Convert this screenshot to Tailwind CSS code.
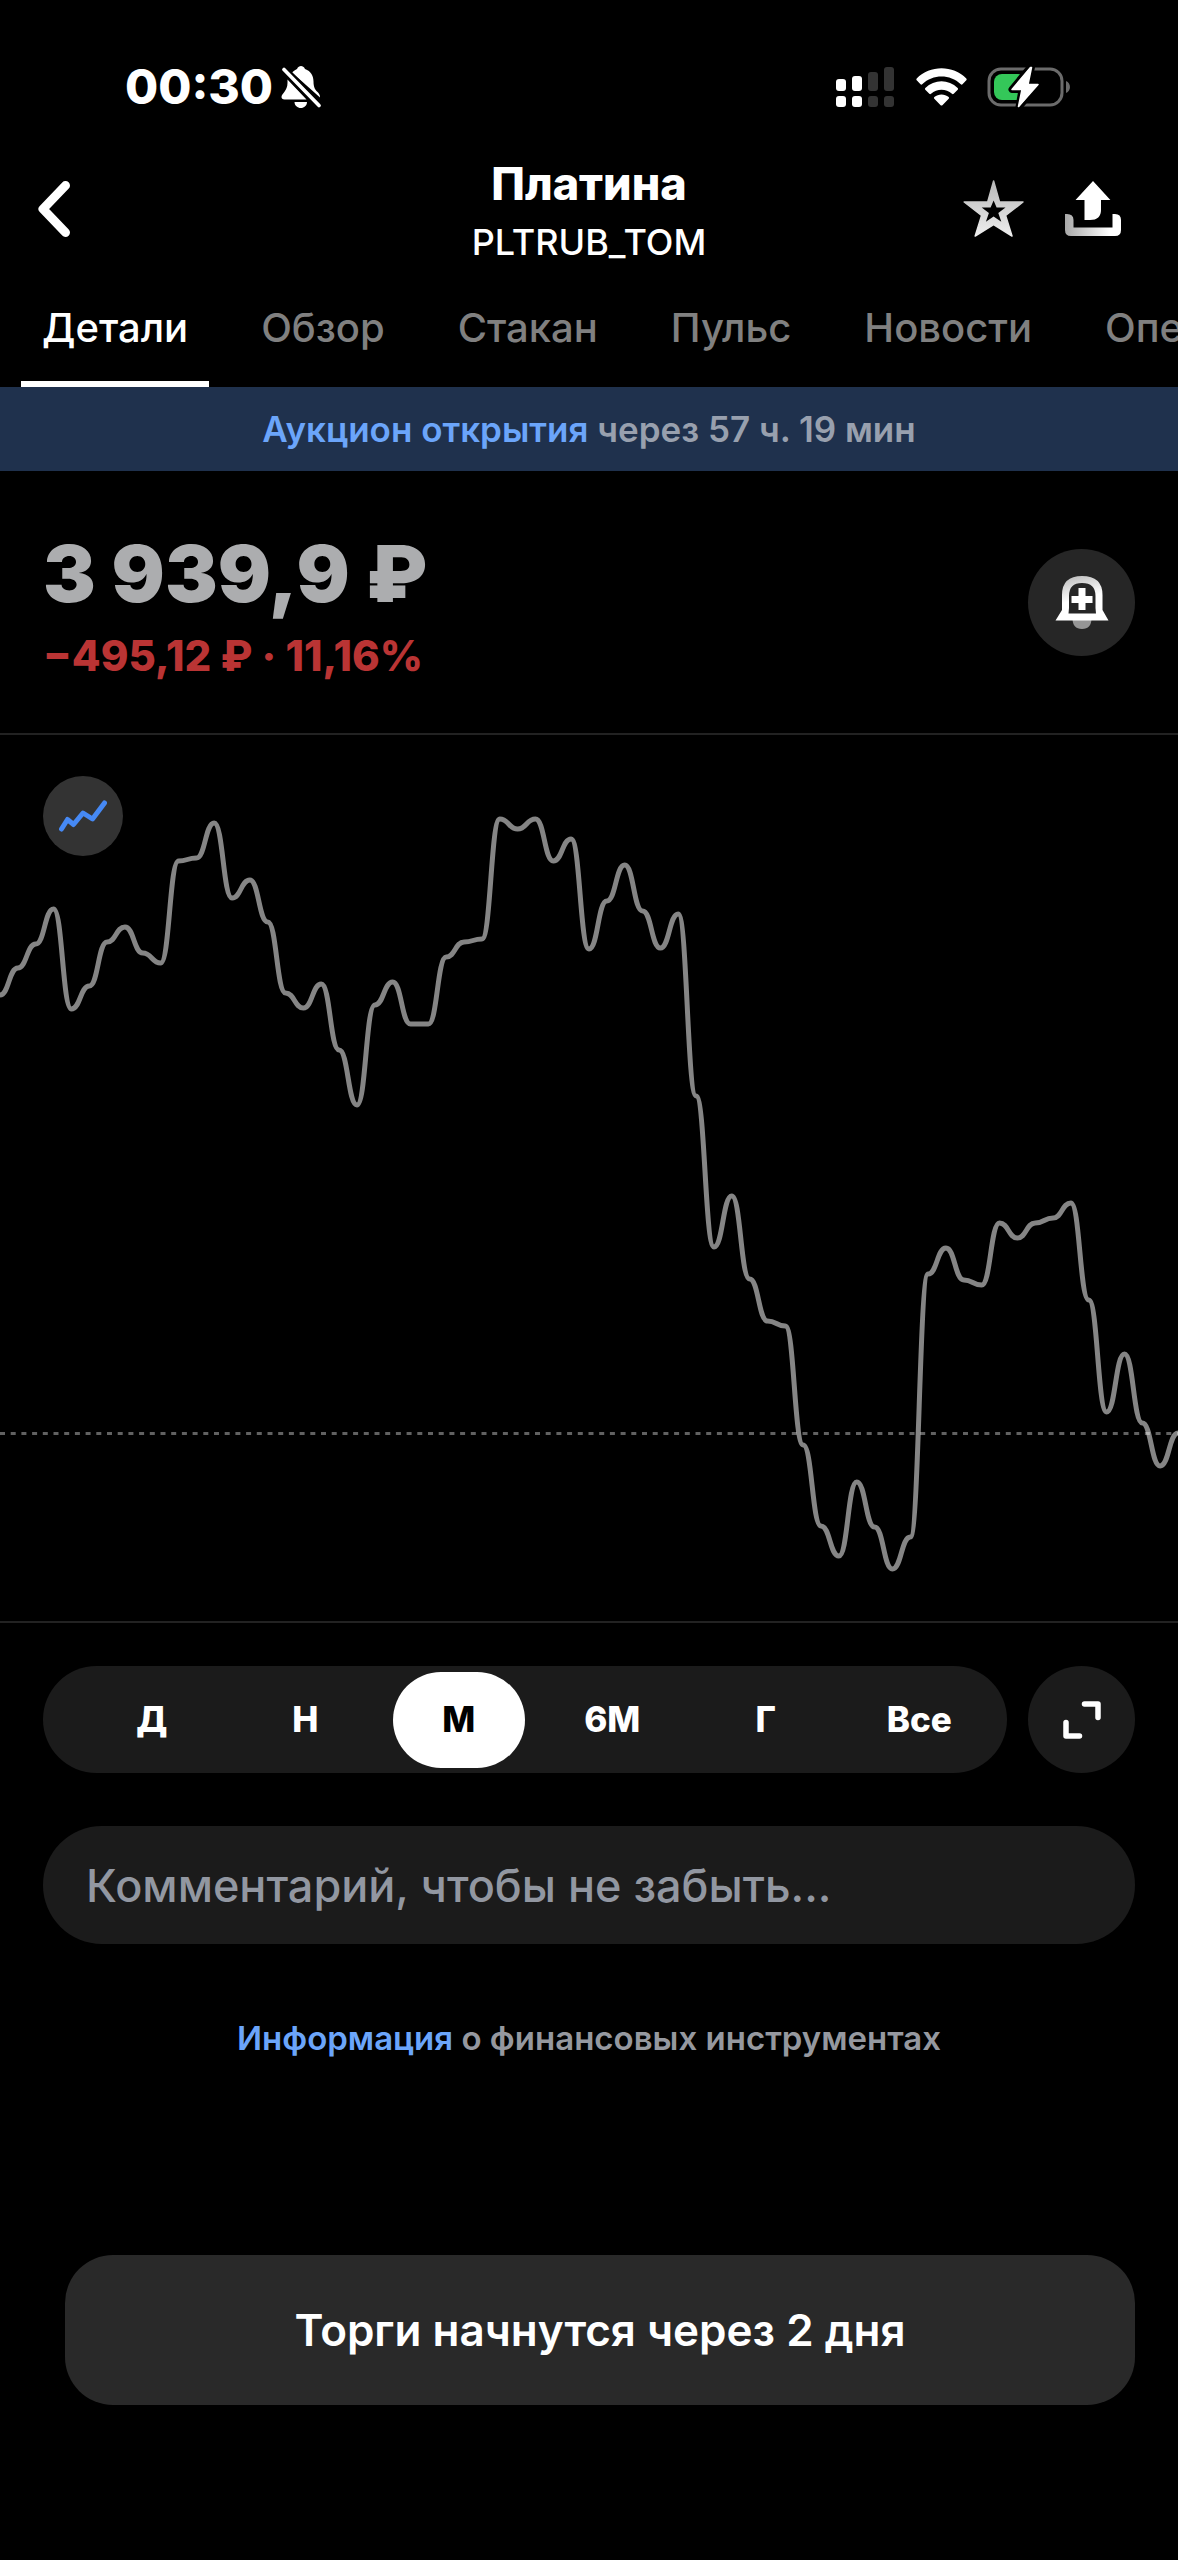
<!DOCTYPE html>
<html lang="ru">
<head>
    <meta charset="UTF-8">
    <meta name="viewport" content="width=device-width, initial-scale=1.0">
    <title>Платина - PLTRUB_TOM</title>
    <script src="https://cdn.jsdelivr.net/npm/@tailwindcss/browser@4"></script>
</head>
<body class="bg-black text-white min-h-screen overflow-x-hidden font-['Inter','Liberation_Sans',sans-serif]">
    <!-- Status bar -->
    <div class="h-[134px] pt-10 pl-[125px] pr-[107px] flex items-center justify-between">
        <div class="flex items-center gap-2">
            <span class="text-[48px] leading-[56px] font-extrabold">00:30</span>
            <svg class="w-10 h-[42px]" viewBox="0 0 40 42" fill="#fff" aria-hidden="true">
                <path d="M11 6.500C13 4.500 15 3.500 16 3C17 .8 18.500 0 20 0C21.500 0 23 .8 24 3C30 5 32.500 10 32.500 15.500C32.500 21 34 23.500 36 25.500C38 27.500 39 28.500 39 31.500Z"/>
                <path d="M6.500 13.500L25.500 33.500H3.500C1.500 33.500 .5 32.500 .5 31C.5 27.500 6.500 25 6.500 17Z"/>
                <path d="M13.500 36H26C26 39.500 23 42 19.800 42C16.500 42 13.500 39.500 13.500 36Z"/>
                <path d="M3 3.500L38 39.500" stroke="#000" stroke-width="8"/>
                <path d="M3 3.500L38 39.500" stroke="#fff" stroke-width="3.600" stroke-linecap="round"/>
            </svg>
        </div>
        <div class="flex items-center gap-5">
            <svg class="w-[60px] h-10" viewBox="0 0 60 40" fill="#fff" aria-hidden="true">
                <rect x="0" y="12" width="10" height="12" rx="3"/>
                <rect x="16" y="9" width="10" height="15" rx="3"/>
                <rect x="32" y="5" width="10" height="19" rx="3" fill="#333"/>
                <rect x="48" y="0" width="10" height="24" rx="3" fill="#333"/>
                <rect x="0" y="29" width="10" height="11" rx="3"/>
                <rect x="16" y="29" width="10" height="11" rx="3"/>
                <rect x="32" y="29" width="10" height="11" rx="3" fill="#333"/>
                <rect x="48" y="29" width="10" height="11" rx="3" fill="#333"/>
            </svg>
            <svg class="w-[51px] h-[38px]" viewBox="0 0 51 38" fill="#fff" aria-hidden="true">
                <path d="M.7 10.500C14 -3.200 37 -3.200 50.300 10.500Q51 11.500 50.300 12.300L46.500 16.300Q45.700 17 44.800 16.300C34 6 17 6 6.200 16.300Q5.300 17 4.500 16.300L.7 12.300Q0 11.500 .7 10.500Z"/>
                <path d="M9.300 20C18.500 11 32.500 11 41.700 20Q42.500 21 41.700 21.800L37.700 25.800Q36.800 26.500 36 25.800C30 20.500 21 20.500 15 25.800Q14.200 26.500 13.300 25.800L9.300 21.800Q8.500 21 9.300 20Z"/>
                <path d="M18.300 29C22.500 25.500 28.500 25.500 32.700 29Q33.500 30 32.700 30.800L26.400 37.200Q25.500 38 24.600 37.200L18.300 30.800Q17.500 30 18.300 29Z"/>
            </svg>
            <svg class="w-[84px] h-[42px]" viewBox="0 0 84 42" aria-hidden="true">
                <rect x="2" y="3" width="73" height="36" rx="12" fill="none" stroke="#6b6b6b" stroke-width="3"/>
                <rect x="7" y="8" width="32" height="26" rx="8" fill="#34c759"/>
                <path d="M79 15C84.300 17 84.300 25 79 27Z" fill="#6b6b6b"/>
                <path d="M43.500 1L25 23.500H35L32 41L51 18H41L44.500 1Z" fill="#fff" stroke="#000" stroke-width="7" stroke-linejoin="round" paint-order="stroke"/>
                <path d="M43.500 1.500L25 23.500H35L31.500 40.500L51 18.500H41L44.500 1.500Z" fill="#fff" stroke="#fff" stroke-width="1.500" stroke-linejoin="round"/>
            </svg>
        </div>
    </div>

    <!-- Header -->
    <header class="h-[150px] pl-[37px] pr-[55px] grid grid-cols-[1fr_auto_1fr] items-center">
        <button type="button" aria-label="Назад" class="justify-self-start">
            <svg class="w-9 h-14" viewBox="0 0 36 56" fill="none" stroke="#fff" stroke-width="9" stroke-linecap="round" stroke-linejoin="round">
                <path d="M28.500 4.500L6 28L28.500 51.500"/>
            </svg>
        </button>
        <div class="text-center pl-[18px]">
            <h1 class="text-[45px] leading-[66px] font-extrabold">Платина</h1>
            <p class="text-[36px] leading-[50px] font-medium">PLTRUB_TOM</p>
        </div>
        <div class="justify-self-end flex items-center gap-9">
            <button type="button" aria-label="В избранное">
                <svg class="w-[67px] h-[62px]" viewBox="0 0 67 62">
                    <defs>
                        <linearGradient id="starFill" x1="0" y1="0" x2="0" y2="1">
                            <stop offset="0" stop-color="#b8b8b8"/>
                            <stop offset="1" stop-color="#eee"/>
                        </linearGradient>
                    </defs>
                    <path fill="url(#starFill)" stroke="url(#starFill)" stroke-width="1.500" stroke-linejoin="round" d="M33.600 3L39.500 24H63L45.600 37.500L52 58L33.600 46.500L15.200 58L21.600 37.500L4.200 24H27.700Z"/>
                    <path fill="#000" d="M33.600 22.500L36.600 29.500H45.500L38.300 35L41.300 43.700L33.600 38.500L25.900 43.700L28.900 35L21.700 29.500H30.600Z"/>
                </svg>
            </button>
            <button type="button" aria-label="Поделиться">
                <svg class="w-[60px] h-[62px]" viewBox="0 0 60 62">
                    <defs>
                        <linearGradient id="trayFill" x1="0" y1="0" x2="1" y2="0">
                            <stop offset="0" stop-color="#a8a8a8"/>
                            <stop offset=".8" stop-color="#fff"/>
                        </linearGradient>
                    </defs>
                    <path fill="#fff" d="M30 3L47.400 22H38V32Q38 42 27 42H21.500V22H12.500Z"/>
                    <path fill="url(#trayFill)" d="M2 36H4Q10.500 36 10.500 42V49.500H49.500V36H52Q58 36 58 42V52Q58 58 52 58H8Q2 58 2 52Z"/>
                </svg>
            </button>
        </div>
    </header>

    <!-- Tabs -->
    <nav class="pl-[21px] flex gap-[31px] overflow-hidden whitespace-nowrap text-[40px] leading-[60px] font-medium text-[#808080]">
        <a href="#details" aria-current="page" class="pt-3.5 pb-[23px] px-[21px] border-b-6 border-white text-white">Детали</a>
        <a href="#overview" class="pt-3.5 pb-[23px] px-[21px] border-b-6 border-transparent">Обзор</a>
        <a href="#orderbook" class="pt-3.5 pb-[23px] px-[21px] border-b-6 border-transparent">Стакан</a>
        <a href="#pulse" class="pt-3.5 pb-[23px] px-[21px] border-b-6 border-transparent">Пульс</a>
        <a href="#news" class="pt-3.5 pb-[23px] px-[21px] border-b-6 border-transparent">Новости</a>
        <a href="#operations" class="pt-3.5 pb-[23px] px-[21px] border-b-6 border-transparent">Операции</a>
    </nav>

    <div class="bg-[#1f314d] h-[84px] flex items-center justify-center text-[35px] font-semibold text-[#98a0ae]">
        <p><a href="#auction" class="text-[#6ba5fa]">Аукцион открытия</a> через 57 ч. 19 мин</p>
    </div>

    <main>
        <!-- Price -->
        <section class="h-[264px] px-[43px] flex items-center justify-between border-b-2 border-[#222]">
            <div>
                <p class="text-[79px] leading-[108px] font-black text-[#acadaf]">3 939,9 ₽</p>
                <p class="text-[42px] leading-[58px] font-extrabold text-[#ba3434]">−495,12 ₽ · 11,16%</p>
            </div>
            <button type="button" aria-label="Уведомить о цене" class="size-[107px] rounded-full bg-[#262626] flex items-center justify-center">
                <svg class="w-[54px] h-14" viewBox="0 0 54 56">
                    <defs>
                        <linearGradient id="bellFill" x1="0" y1="0" x2=".3" y2="1">
                            <stop offset="0" stop-color="#b5b5b5"/>
                            <stop offset=".6" stop-color="#fff"/>
                        </linearGradient>
                    </defs>
                    <path fill="#969696" d="M17.500 44H36.500Q36.500 55 27 55Q17.500 55 17.500 44Z"/>
                    <path fill="url(#bellFill)" fill-rule="evenodd" d="M.5 46.500L7 36V21Q7 2 27 2Q47.500 2 47.500 21V36L53.500 46.500ZM13.500 39.500H41L40.500 34V22Q40.500 9 27 9Q14 9 14 22V34Z"/>
                    <path fill="#fff" d="M23.500 14H30.500V22H37.500V29H30.500V36H23.500V29H16.500V22H23.500Z"/>
                </svg>
            </button>
        </section>

        <!-- Chart -->
        <section class="relative border-b-2 border-[#222]">
            <svg id="chart" class="block w-full h-[886px]" viewBox="0 0 1178 886" preserveAspectRatio="none" role="img" aria-label="График цены за месяц">
                <path id="priceLine" fill="none" stroke="#858585" stroke-width="5" stroke-linejoin="round" vector-effect="non-scaling-stroke"/>
                <line x1="0" y1="698.500" x2="1178" y2="698.500" stroke="#fff" stroke-opacity=".38" stroke-width="3" stroke-dasharray="5 5.700"/>
            </svg>
            <button type="button" aria-label="Тип графика" class="absolute top-[41px] left-[43px] size-20 rounded-full bg-[#333] flex items-center justify-center">
                <svg class="w-12 h-8" viewBox="0 0 48 32" fill="none" stroke="#4689f4" stroke-width="5" stroke-linecap="round" stroke-linejoin="round">
                    <path d="M2.500 29L8.500 19.500L14.500 24.500L24 13L33.500 19L45.500 3"/>
                </svg>
            </button>
        </section>

        <section class="px-[43px] pt-[43px] pb-[155px]">
            <div class="flex gap-[21px]">
                <div class="flex-1 h-[107px] pl-8 pr-[11px] rounded-full bg-[#1b1b1b] grid grid-cols-6 items-center justify-items-center text-[35px] font-extrabold">
                    <button type="button" class="w-[132px] h-24 rounded-full">Д</button>
                    <button type="button" class="w-[132px] h-24 rounded-full">Н</button>
                    <button type="button" aria-pressed="true" class="w-[132px] h-24 rounded-full bg-white text-black">М</button>
                    <button type="button" class="w-[132px] h-24 rounded-full">6М</button>
                    <button type="button" class="w-[132px] h-24 rounded-full">Г</button>
                    <button type="button" class="w-[132px] h-24 rounded-full">Все</button>
                </div>
                <button type="button" aria-label="На весь экран" class="size-[107px] rounded-full bg-[#1b1b1b] flex items-center justify-center">
                    <svg class="w-[38px] h-[38px]" viewBox="0 0 38 38" fill="none" stroke="#fff" stroke-width="5.500" stroke-linecap="round" stroke-linejoin="round">
                        <path d="M21.500 3H35V16.500M3 21.500V35H16.500"/>
                    </svg>
                </button>
            </div>

            <input type="text" aria-label="Комментарий" placeholder="Комментарий, чтобы не забыть..."
                class="mt-[53px] block w-full h-[118px] px-[43px] rounded-full bg-[#1b1b1b] text-[45px] font-medium placeholder:text-[#9297a1] focus:outline-none">

            <p class="mt-[66px] text-center text-[33px] leading-[56px] font-semibold text-[#95989f]"><a href="#info" class="text-[#6ba5fa]">Информация</a> о финансовых инструментах</p>

            <div class="mt-[189px] pl-[22px]">
                <button type="button" class="w-full h-[150px] rounded-[48px] bg-[#292929] text-[44px] font-semibold">Торги начнутся через 2 дня</button>
            </div>
        </section>
    </main>

    <script>
    // Вертикальные координаты точек графика, шаг по горизонтали одинаковый
    const points = [
        260, 233, 209, 174, 274, 251, 207, 192, 218, 228, 126, 123, 88, 163, 145, 187, 258,
        273, 249, 315, 370, 270, 247, 289, 289, 222, 207, 204, 84, 94, 84, 126, 104, 214,
        166, 130, 176, 213, 179, 361, 512, 461, 544, 586, 591, 710, 791, 821, 747, 792, 834,
        802, 539, 513, 545, 550, 488, 503, 488, 483, 468, 565, 677, 619, 688, 731, 698
    ];
    const step = 1178 / (points.length - 1);

    let d = `M0 ${points[0]}`;
    for (let i = 1; i < points.length; i++) {
        const x0 = (i - 1) * step;
        const x1 = i * step;
        d += ` C${x0 + step / 2} ${points[i - 1]} ${x1 - step / 2} ${points[i]} ${x1} ${points[i]}`;
    }
    document.getElementById('priceLine').setAttribute('d', d);
    </script>
</body>
</html>
